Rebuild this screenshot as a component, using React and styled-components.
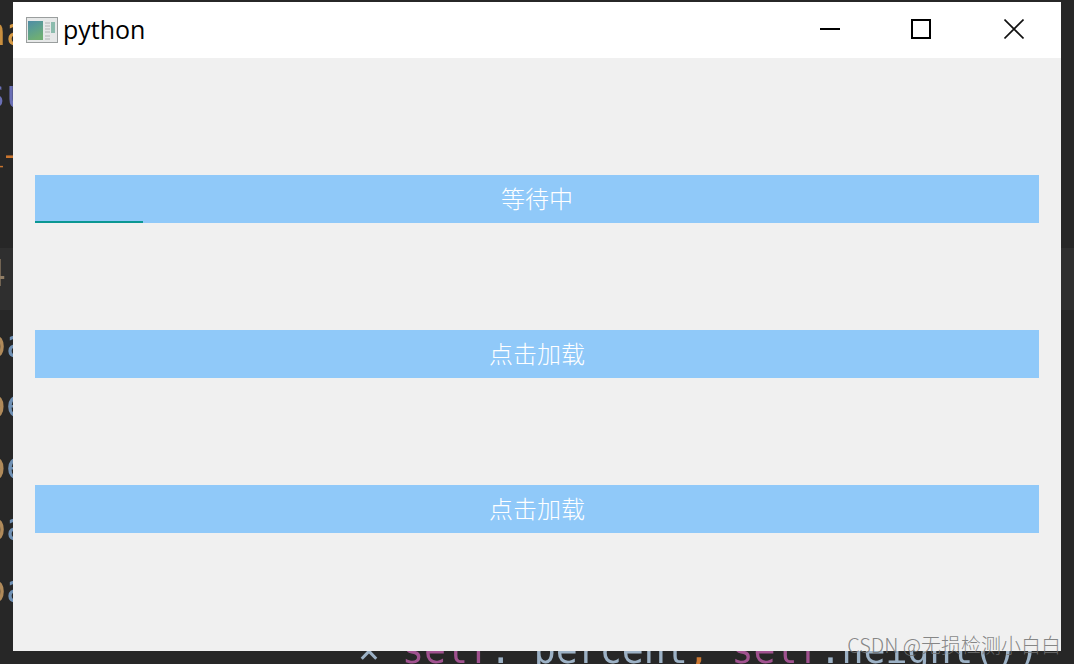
import React from 'react';
import styled, { createGlobalStyle } from 'styled-components';

const GlobalStyle = createGlobalStyle`
  html, body {
    margin: 0;
    padding: 0;
    background: #272727;
  }
`;

const Desktop = styled.div`
  position: relative;
  width: 1074px;
  height: 664px;
  overflow: hidden;
  background: #272727;
  padding: 2px 13px 13px;
  box-sizing: border-box;
  display: flex;
`;

const ActiveLine = styled.div`
  position: absolute;
  left: 0;
  right: 0;
  top: 248px;
  height: 62px;
  background: #2f2f2f;
`;

const Code = styled.span`
  position: absolute;
  left: ${({ $left }) => $left}px;
  top: ${({ $top }) => $top}px;
  font-family: 'DejaVu Sans Mono', monospace;
  font-size: 36.5px;
  line-height: 40px;
  white-space: pre;
  color: ${({ $color }) => $color};
  filter: blur(0.5px);
`;

const Tint = styled.span`
  color: ${({ $color }) => $color};
`;

const Window = styled.div`
  position: relative;
  flex: 1;
  display: flex;
  flex-direction: column;
  background: #f0f0f0;
`;

const TitleBar = styled.div`
  height: 56px;
  flex: none;
  display: flex;
  align-items: center;
  background: #fff;
  padding-left: 13px;
`;

const Title = styled.span`
  margin-left: 5px;
  font-family: 'Open Sans', sans-serif;
  font-size: 25px;
  line-height: 54px;
  padding-bottom: 2px;
  color: #000;
`;

const Controls = styled.div`
  margin-left: auto;
  display: flex;
  height: 100%;
  padding: 0 1px 2px 0;
  box-sizing: border-box;
`;

const Control = styled.div`
  width: ${({ $width }) => $width}px;
  display: flex;
  align-items: center;
  justify-content: center;
`;

const Content = styled.div`
  flex: 1;
  display: flex;
  flex-direction: column;
  gap: 107px;
  padding: 117px 22px 0;
`;

const LoadButton = styled.div`
  position: relative;
  height: 48px;
  box-sizing: border-box;
  padding-bottom: 4px;
  display: flex;
  align-items: center;
  justify-content: center;
  background: #90c9f9;
  color: #fff;
  font-family: 'Noto Sans CJK SC', sans-serif;
  font-size: 24px;
  font-weight: 300;
`;

const Progress = styled.div`
  position: absolute;
  left: 0;
  bottom: 0;
  height: 2px;
  background: #0b9793;
`;

const Watermark = styled.span`
  position: absolute;
  right: 13px;
  bottom: 7px;
  font-family: 'Noto Sans CJK SC', sans-serif;
  font-size: 20px;
  font-weight: 300;
  line-height: 24px;
  white-space: nowrap;
  color: rgba(115, 115, 115, 0.85);
`;

const AppIcon = () => (
  <svg width="32" height="26" viewBox="0 0 32 26">
    <defs>
      <linearGradient id="pane" x1="0" y1="0" x2="0.4" y2="1">
        <stop offset="0" stopColor="#4f8ca6" />
        <stop offset="0.5" stopColor="#5c9f90" />
        <stop offset="1" stopColor="#6fae74" />
      </linearGradient>
    </defs>
    <rect x="0.5" y="0.5" width="31" height="25" fill="#e6e8e8" stroke="#9a9e9e" />
    <rect x="2" y="4" width="15" height="19" fill="url(#pane)" />
    <path d="M19 6h5M19 9h5M19 12h5M19 15h5M19 19h5M19 22h5" stroke="#b0b4b4" strokeWidth="1" />
    <rect x="25" y="5" width="4" height="11" fill="#8cbcae" />
  </svg>
);

const MinimizeIcon = () => (
  <svg width="20" height="20" viewBox="0 0 20 20">
    <path d="M0 10h20" stroke="#000" strokeWidth="2" />
  </svg>
);

const MaximizeIcon = () => (
  <svg width="20" height="20" viewBox="0 0 20 20">
    <rect x="1" y="1" width="18" height="18" fill="none" stroke="#000" strokeWidth="2" />
  </svg>
);

const CloseIcon = () => (
  <svg width="20" height="20" viewBox="0 0 20 20">
    <path d="M0.5 0.5l19 19M19.5 0.5l-19 19" stroke="#111" strokeWidth="1.6" />
  </svg>
);

const tan = '#b08a5a';
const steel = '#6f90b4';

// what peeks out left of the window, one or two letters per editor line
const codeBits = [
  { first: 'n', second: 'a', left: -16, top: 13, firstColor: '#c98f3f', secondColor: '#d69a45' },
  { first: 's', second: 'u', left: -16, top: 75, firstColor: '#6a6fb5', secondColor: '#6a6fb5' },
  { first: '—', second: '', left: 6, top: 135, firstColor: '#c9752f', secondColor: tan },
  { first: '_', second: '', left: -19, top: 126, firstColor: '#c9752f', secondColor: tan },
  { first: '4', second: '', left: -16, top: 254, firstColor: '#8f7c64', secondColor: tan },
  { first: 'p', second: 'a', left: -16, top: 325, firstColor: tan, secondColor: steel },
  { first: 'o', second: 'e', left: -16, top: 385, firstColor: tan, secondColor: steel },
  { first: 'o', second: 'e', left: -16, top: 447, firstColor: tan, secondColor: steel },
  { first: 'p', second: 'a', left: -16, top: 508, firstColor: tan, secondColor: steel },
  { first: 'p', second: 'a', left: -16, top: 570, firstColor: tan, secondColor: steel },
];

const App = () => (
  <>
    <GlobalStyle />
    <Desktop>
      <ActiveLine />
      {codeBits.map((bit) => (
        <Code key={`${bit.left}-${bit.top}`} $left={bit.left} $top={bit.top} $color={bit.firstColor}>
          {bit.first}
          <Tint $color={bit.secondColor}>{bit.second}</Tint>
        </Code>
      ))}
      <Code $left={358} $top={631} $color="#9db2c6">
        {'× '}
        <Tint $color="#a0528f">self</Tint>
        {'. percent'}
        <Tint $color="#cc7832">,</Tint>{' '}
        <Tint $color="#a0528f">self</Tint>
        {'.height())'}
      </Code>
      <Window>
        <TitleBar>
          <AppIcon />
          <Title>python</Title>
          <Controls>
            <Control $width={88}>
              <MinimizeIcon />
            </Control>
            <Control $width={94}>
              <MaximizeIcon />
            </Control>
            <Control $width={92}>
              <CloseIcon />
            </Control>
          </Controls>
        </TitleBar>
        <Content>
          <LoadButton>
            等待中
            <Progress style={{ width: '108px' }} />
          </LoadButton>
          <LoadButton>点击加载</LoadButton>
          <LoadButton>点击加载</LoadButton>
        </Content>
      </Window>
      <Watermark>CSDN @无损检测小白白</Watermark>
    </Desktop>
  </>
);

export default App;
